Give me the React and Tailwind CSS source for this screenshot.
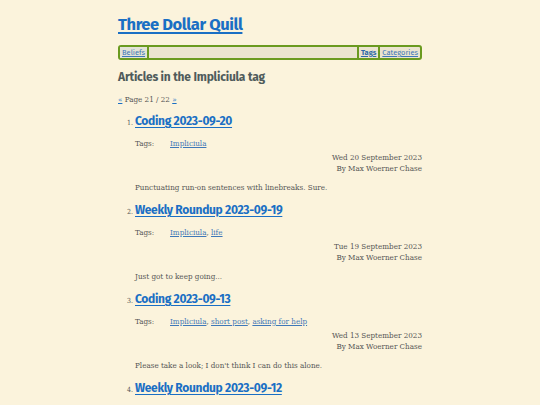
import React from 'react'

const posts = [
  {
    title: 'Coding 2023-09-20',
    tags: ['Impliciula'],
    date: 'Wed 20 September 2023',
    summary: 'Punctuating run-on sentences with linebreaks. Sure.',
  },
  {
    title: 'Weekly Roundup 2023-09-19',
    tags: ['Impliciula', 'life'],
    date: 'Tue 19 September 2023',
    summary: 'Just got to keep going...',
  },
  {
    title: 'Coding 2023-09-13',
    tags: ['Impliciula', 'short post', 'asking for help'],
    date: 'Wed 13 September 2023',
    summary: "Please take a look; I don't think I can do this alone.",
  },
  {
    title: 'Weekly Roundup 2023-09-12',
    tags: ['Impliciula'],
    date: 'Tue 12 September 2023',
    summary: 'Keep going.',
  },
]

const sans = "font-['Fira_Sans','Lato','Noto_Sans',sans-serif]"
const serif = "font-['DejaVu_Serif_Condensed','DejaVu_Serif',serif]"

export default function App() {
  return (
    <div className={`min-h-[405px] bg-[#fbf3dc] ${serif} text-[#555]`}>
      <div className="w-[304px] mx-auto pt-[14px]">
        <h1 className={`${sans} text-[16.5px] tracking-[-0.4px] font-bold leading-[22px]`}>
          <a href="#" className="text-[#1a6fc4] underline decoration-2 underline-offset-2">Three Dollar Quill</a>
        </h1>

        {/* Nav */}
        <nav className={`${sans} mt-[9px] h-[15px] flex items-stretch border-2 border-[#6a9a1f] rounded-[3px] bg-[#ebe4cf] text-[7.5px] leading-[11px]`}>
          <a href="#" className="px-[2px] bg-[#e3e3d6] text-[#3f78b8] underline">Beliefs</a>
          <span className="w-[2px] bg-[#6a9a1f]" />
          <span className="flex-1" />
          <span className="w-[2px] bg-[#6a9a1f]" />
          <a href="#" className="px-[2px] font-bold text-[#2f6aa8] underline">Tags</a>
          <span className="w-[2px] bg-[#6a9a1f]" />
          <a href="#" className="px-[2px] text-[#3f78b8] underline">Categories</a>
        </nav>

        <h2 className={`${sans} mt-[9px] text-[12px] tracking-[-0.2px] font-bold leading-[16px] text-[#4f5b5b]`}>
          Articles in the Impliciula tag
        </h2>

        <p className="mt-[10px] text-[8px] leading-[10px]">
          <a href="#" className="text-[#1a6fc4] underline">«</a> Page 21 / 22{' '}
          <a href="#" className="text-[#1a6fc4] underline">»</a>
        </p>

        <ol className="mt-[8px] pl-[17px]">
          {posts.map((p, i) => (
            <li key={i} className="mb-[9px]">
              <div className="flex items-baseline">
                <span className="w-[17px] -ml-[17px] pr-[2px] text-right text-[7px]">{i + 1}.</span>
                <a href="#" className={`${sans} text-[12px] tracking-[-0.3px] font-bold leading-[16px] text-[#1a6fc4] underline underline-offset-2`}>
                  {p.title}
                </a>
              </div>
              <div className="mt-[10px] flex text-[8px] leading-[10px]">
                <span className="w-[35px]">Tags:</span>
                <span>
                  {p.tags.map((t, j) => (
                    <React.Fragment key={t}>
                      <a href="#" className="text-[#3f78b8] underline">{t}</a>
                      {j < p.tags.length - 1 && ', '}
                    </React.Fragment>
                  ))}
                </span>
              </div>
              <div className="mt-[3px] text-right text-[8px] leading-[11px]">
                <div>{p.date}</div>
                <div>By Max Woerner Chase</div>
              </div>
              <p className="mt-[9px] text-[8px] leading-[10px]">{p.summary}</p>
            </li>
          ))}
        </ol>
      </div>
    </div>
  )
}
